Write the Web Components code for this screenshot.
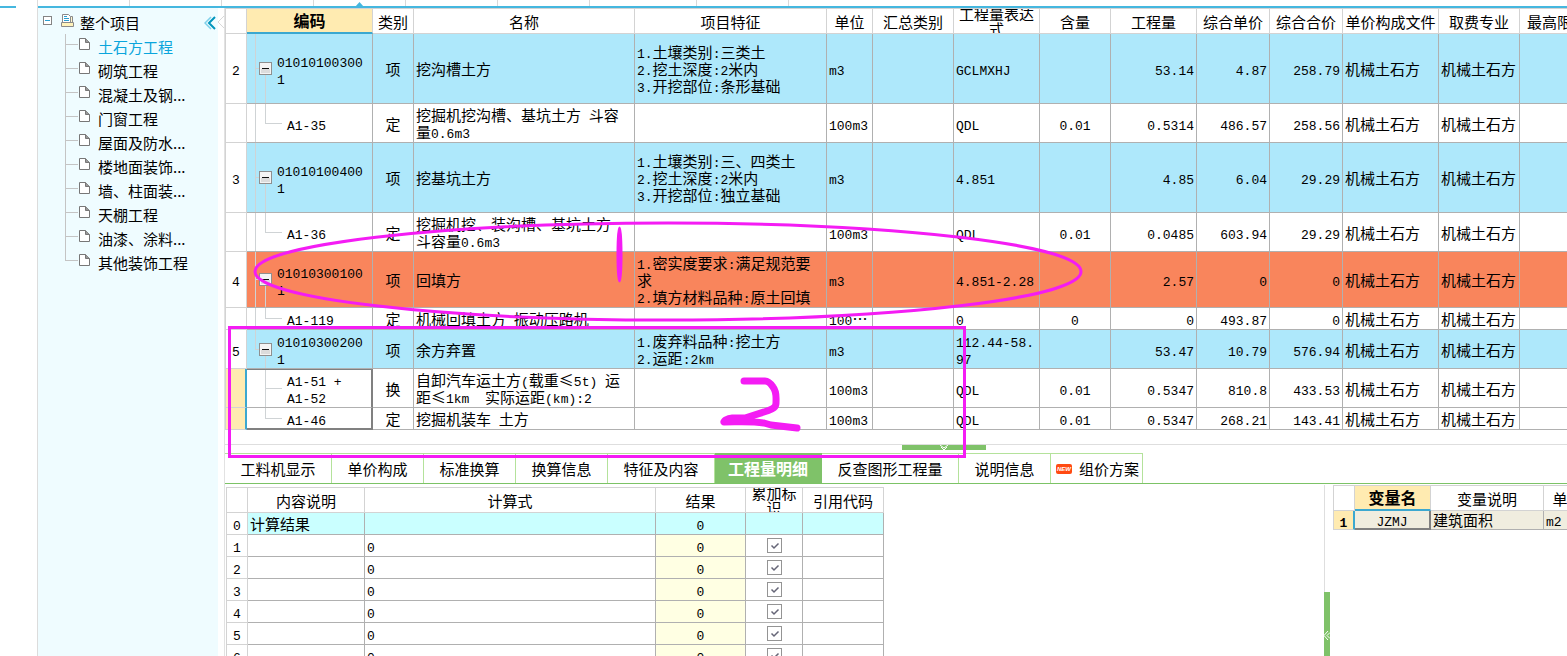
<!DOCTYPE html>
<html lang="zh-CN">
<head>
<meta charset="utf-8">
<title>工程量清单</title>
<style>
html, body { margin: 0; height: 100%; }
body { overflow: hidden; background: #fff; color: #000; font: 15px/17px "Noto Sans CJK SC", sans-serif; }
</style>
</head>
<body>
<cost-app></cost-app>
<script>
const BASE = `
*, *::before, *::after { box-sizing: border-box; }
button { font: inherit; color: inherit; background: none; border: 0; padding: 0; margin: 0; }
a { color: inherit; text-decoration: none; }
svg { display: block; }
.a { font-family: "Liberation Mono", monospace; font-size: 13px; line-height: 0; }
table { table-layout: fixed; border-collapse: separate; border-spacing: 0; border-left: 1px solid #d3d3d3; border-top: 1px solid #d3d3d3; }
th, td { padding: 0 2px; white-space: pre; overflow: hidden; font-weight: normal; border-right: 1px solid #b0b0b0; border-bottom: 1px solid #b0b0b0; text-align: left; vertical-align: middle; }
thead th, tbody th { border-color: #d3d3d3; text-align: center; }
thead th { padding: 0; height: 25px; }
.head { display: flex; height: 24px; align-items: center; justify-content: center; overflow: hidden; line-height: 15px; }
th.on { background: #ffebb1; font-weight: bold; font-size: 16px; }
thead th.on { border-bottom: 2px solid #3ba8d0; }
.on .head { height: 23px; }
.c { text-align: center; }
.r { text-align: right; }
`;
// Latin letters and digits are set in the fixed-width face, Chinese in the page face.
const mix = s => String(s).replace(/[\x20-\x7e]+/g, m => `<span class="a">${m}</span>`);
const cols = list => `<colgroup>${list.map(w => w ? `<col style="width:${w}px">` : '<col>').join('')}</colgroup>`;
const head = (list, active) => `<thead><tr>${list.map(t =>
  `<th scope="col"${t === active ? ' class="on"' : ''}><div class="head">${t}</div></th>`).join('')}</tr></thead>`;

class Base extends HTMLElement {
  constructor() {
    super();
    const t = document.createElement('template');
    t.innerHTML = `<style>${BASE}${this.css()}</style>${this.html()}`;
    this.attachShadow({ mode: 'open' }).append(t.content.cloneNode(true));
  }
  css() { return ''; }
  html() { return ''; }
}

class TopStrip extends Base {
  css() { return `
:host { display: flex; position: relative; height: 8px; border-bottom: 2px solid #45b7df; }
i { width: 92px; border-right: 1px solid #d9d9d9; }
i.w { width: 107px; }
svg { position: absolute; left: 317px; top: 2px; }`; }
  html() { return `<i></i><i></i><i></i><i></i><i></i><i></i><i class="w"></i><i></i>
<svg width="9" height="5" viewBox="0 0 9 5"><path d="M0 5 4.5 0 9 5z" fill="#45b7df"/></svg>`; }
}
customElements.define('top-strip', TopStrip);

class ProjectTree extends Base {
  css() { return `
:host { display: block; position: relative; width: 180px; padding-top: 2px; background: #effcff; }
.root, a { display: flex; align-items: center; height: 24px; white-space: nowrap; }
.root { padding-left: 5px; }
.root > svg { flex: none; margin: 0 9px 4px 0; }
.root > svg + svg { margin: 0 6px 4px 0; }
.fold { position: absolute; right: 2px; top: 8px; }
ul { list-style: none; margin: 0; padding: 0 0 0 27px; }
li { position: relative; }
li::before { content: ""; position: absolute; left: 0; top: 0; width: 13px; height: 11px; border-left: 1px solid #c4c4c4; border-bottom: 1px solid #c4c4c4; }
li:not(:last-child)::after { content: ""; position: absolute; left: 0; top: 0; height: 100%; border-left: 1px solid #c4c4c4; }
a { padding-left: 14px; }
a svg { margin: 0 8px 4px 0; }
a.sel { color: #0aa5dc; }`; }
  html() {
    const names = ['土石方工程', '砌筑工程', '混凝土及钢...', '门窗工程', '屋面及防水...', '楼地面装饰...', '墙、柱面装...', '天棚工程', '油漆、涂料...', '其他装饰工程'];
    return `<div class="root">
<svg width="9" height="9" viewBox="0 0 9 9"><rect x=".5" y=".5" width="8" height="8" fill="#fff" stroke="#848484"/><path d="M2 4.5h5" stroke="#2a9fd0"/></svg>
<svg width="13" height="13" viewBox="0 0 13 13"><path d="M9.500 2.500h2v9h-10v-3" fill="#fff8cf" stroke="#8a8a8a"/><path d="M1.500.5h6l2 2v6h-8z" fill="#fff" stroke="#8a8a8a"/><path d="M3 2.500h3M3 4.500h5M3 6.500h5" stroke="#2a9fd0"/><path d="M.5 8.500h12v4H.5z" fill="#fff3bb" stroke="#8a8a8a"/></svg>
<span>整个项目</span>
<button class="fold" aria-label="收起"><svg width="12" height="14" viewBox="0 0 12 14" fill="none" stroke-width="1.500"><path d="M7 1 1 7l6 6" stroke="#7fd0ea"/><path d="M11 1 5 7l6 6" stroke="#0095bd" stroke-width="2"/></svg></button>
</div><ul>${names.map((n, i) => `<li><a href="#"${i ? '' : ' class="sel"'}><svg width="11" height="12" viewBox="0 0 11 12"><path d="M.5.5h6l4 4v7H.5z" fill="#fff" stroke="#777"/><path d="M6.500.5v4h4" fill="#999" stroke="#777"/></svg><span>${n}</span></a></li>`).join('')}</ul>`;
  }
}
customElements.define('project-tree', ProjectTree);

class BillGrid extends Base {
  css() { return `
:host { display: block; padding-bottom: 14px; border-bottom: 1px solid #dedede; overflow: hidden; }
table { width: calc(100% + 28px); }
tr.item td { background-color: #aee8fb; }
tr.alert td { background-color: #f9855c; }
.code { --l: linear-gradient(#cfd3d5, #cfd3d5); padding: 0; background-repeat: no-repeat; }
.wrap { display: flex; align-items: center; padding-left: 12px; }
.wrap button { flex: none; margin-right: 5px; }
.item .code, .alert .code { background-image: var(--l), var(--l), var(--l); background-size: 1px 100%, 4px 1px, 1px 45%; background-position: 8px 0, 8px 50%, 18px 100%; }
.item.end .code { background-size: 1px 50%, 4px 1px, 1px 45%; }
.kid .code { padding-left: 40px; background-image: var(--l), var(--l), var(--l); background-size: 1px 100%, 1px 50%, 17px 1px; background-position: 8px 0, 18px 0, 18px 50%; }
.kid.pick .code { background-image: var(--l), var(--l); background-size: 1px 100%, 17px 1px; background-position: 18px 0, 18px 50%; border-right: 2px solid gray; box-shadow: inset 0 1px gray; }
.kid.last .code { background-size: 1px 50%, 17px 1px; border-bottom: 2px solid gray; box-shadow: none; }
.pick th { background: #ffebb1; border-right: 2px solid #3ba8d0; }`; }
  html() {
    const f = '机械土石方';
    const rows = [
      ['item', 70, 2, '01010100300\n1', '项', '挖沟槽土方', '1.土壤类别:三类土\n2.挖土深度:2米内\n3.开挖部位:条形基础', 'm3', 'GCLMXHJ', '', '53.14', '4.87', '258.79'],
      ['kid', 39, '', 'A1-35', '定', '挖掘机挖沟槽、基坑土方 斗容\n量0.6m3', '', '100m3', 'QDL', '0.01', '0.5314', '486.57', '258.56'],
      ['item', 70, 3, '01010100400\n1', '项', '挖基坑土方', '1.土壤类别:三、四类土\n2.挖土深度:2米内\n3.开挖部位:独立基础', 'm3', '4.851', '', '4.85', '6.04', '29.29'],
      ['kid', 39, '', 'A1-36', '定', '挖掘机挖、装沟槽、基坑土方\n斗容量0.6m3', '', '100m3', 'QDL', '0.01', '0.0485', '603.94', '29.29'],
      ['alert', 56, 4, '01010300100\n1', '项', '回填方', '1.密实度要求:满足规范要\n求\n2.填方材料品种:原土回填', 'm3', '4.851-2.28', '', '2.57', '0', '0'],
      ['kid', 22, '', 'A1-119', '定', '机械回填土方 振动压路机', '', '100…', '0', '0', '0', '493.87', '0'],
      ['item end', 39, 5, '01010300200\n1', '项', '余方弃置', '1.废弃料品种:挖土方\n2.运距:2km', 'm3', '112.44-58.\n97', '', '53.47', '10.79', '576.94'],
      ['kid pick', 39, '', 'A1-51 +\nA1-52', '换', '自卸汽车运土方(载重≤5t) 运\n距≤1km  实际运距(km):2', '', '100m3', 'QDL', '0.01', '0.5347', '810.8', '433.53'],
      ['kid pick last', 22, '', 'A1-46', '定', '挖掘机装车 土方', '', '100m3', 'QDL', '0.01', '0.5347', '268.21', '143.41']
    ];
    const box = `<button aria-label="折叠"><svg width="13" height="13" viewBox="0 0 13 13"><rect x=".5" y=".5" width="12" height="12" fill="#f4f4f4" stroke="#8f8f8f"/><path d="M2 7h9v4H2z" fill="#dcdcdc"/><path d="M3 6.500h7" stroke="#111"/></svg></button>`;
    const body = rows.map(([cls, h, no, code, kind, name, feat, unit, expr, ratio, qty, price, sum]) => `<tr class="${cls}" style="height:${h}px">
<th scope="row">${mix(no)}</th><td class="code">${cls.startsWith('kid') ? mix(code) : `<div class="wrap">${box}<span>${mix(code)}</span></div>`}</td><td class="c">${kind}</td><td>${mix(name)}</td><td>${mix(feat)}</td><td>${mix(unit)}</td><td></td><td>${mix(expr)}</td><td class="c">${mix(ratio)}</td><td class="r">${mix(qty)}</td><td class="r">${mix(price)}</td><td class="r">${mix(sum)}</td><td>${f}</td><td>${f}</td><td></td></tr>`).join('');
    return `<table>${cols([21, 126, 41, 221, 192, 46, 81, 86, 71, 86, 73, 73, 96, 81, 0])}${head(['', '编码', '类别', '名称', '项目特征', '单位', '汇总类别', '工程量表达\n式', '含量', '工程量', '综合单价', '综合合价', '单价构成文件', '取费专业', '最高限价'], '编码')}<tbody>${body}</tbody></table>`;
  }
}
customElements.define('bill-grid', BillGrid);

class DetailTabs extends Base {
  css() { return `
:host { display: block; }
.grip { display: flex; justify-content: center; height: 8px; }
.grip button { width: 84px; height: 5px; margin-left: 96px; background: #7fc269; }
.grip svg { margin: auto; }
.bar { display: flex; height: 31px; border-bottom: 1px solid #7cc366; }
.tab { flex: none; width: 92px; height: 30px; border-top: 1px solid #b4e29b; border-right: 1px solid #b4e29b; white-space: nowrap; }
.w1 { width: 107px; }
.w2 { width: 137px; }
.on { background: #7fc269; border-color: #7fc269; color: #fff; font-weight: bold; font-size: 16px; }
.tag { display: flex; align-items: center; justify-content: space-between; padding: 0 3px 0 5px; }
.new { display: block; width: 16px; height: 10px; border-radius: 2px; background: #ff4a12; color: #fff; font: italic bold 6px/10px "Liberation Sans", sans-serif; text-align: center; }`; }
  html() {
    const tabs = [['工料机显示', 'w1'], ['单价构成', ''], ['标准换算', ''], ['换算信息', ''], ['特征及内容', 'w1'], ['工程量明细', 'w1 on'], ['反查图形工程量', 'w2'], ['说明信息', '']];
    return `<div class="grip"><button aria-label="收起明细"><svg width="10" height="5" viewBox="0 0 10 5" fill="none" stroke="#fff"><path d="M1 0l4 3 4-3M2 2l3 3 3-3"/></svg></button></div>
<div class="bar" role="tablist">${tabs.map(([t, c]) => `<button role="tab" class="tab ${c}" aria-selected="${c.includes('on')}">${t}</button>`).join('')}<button role="tab" class="tab tag" aria-selected="false"><span class="new">NEW</span><span>组价方案</span></button></div>`;
  }
}
customElements.define('detail-tabs', DetailTabs);

class QuantityGrid extends Base {
  css() { return `
:host { display: block; padding: 3px 0 0 1px; overflow: hidden; }
table { width: 658px; }
tbody tr { height: 22px; }
tr.sum td { background: #caffff; }
.y { background: #ffffe3; }
input { appearance: none; display: block; width: 15px; height: 15px; margin: 0 auto; border: 1px solid #949494; background: #fff; }
input:checked { background: #fff url("data:image/svg+xml,%3Csvg xmlns='http://www.w3.org/2000/svg' width='13' height='13'%3E%3Cpath d='M3.500 6.500l2.500 2.500 4.500-4.500' fill='none' stroke='%23667' stroke-width='1.500'/%3E%3C/svg%3E") center no-repeat; }`; }
  html() {
    const rows = [1, 2, 3, 4, 5, 6, 7].map(n => `<tr><th scope="row">${mix(n)}</th><td></td><td>${mix(0)}</td><td class="y c">${mix(0)}</td><td><input type="checkbox" checked aria-label="累加标识 ${n}"></td><td></td></tr>`).join('');
    return `<table>${cols([21, 117, 291, 90, 57, 0])}${head(['', '内容说明', '计算式', '结果', '累加标\n识', '引用代码'])}<tbody><tr class="sum"><th scope="row">${mix(0)}</th><td>计算结果</td><td></td><td class="c">${mix(0)}</td><td></td><td></td></tr>${rows}</tbody></table>`;
  }
}
customElements.define('quantity-grid', QuantityGrid);

class VariableGrid extends Base {
  css() { return `
:host { display: flex; width: 243px; margin-top: 1px; overflow: hidden; }
.split { flex: none; width: 6px; margin-right: 3px; border-left: 1px solid #dedede; padding-top: 107px; }
.split button { display: flex; width: 6px; height: 86px; margin-left: -1px; background: #7fc269; }
.split svg { margin: auto; }
table { flex: none; align-self: flex-start; width: 259px; }
tbody tr { height: 19px; }
td { background: #f0eddf; }
th.on .a { font-weight: bold; }
tbody th { border-right: 2px solid #3ba8d0; }
tbody td, tbody th { line-height: 16px; }
td.cur { border-right: 2px solid gray; border-bottom: 2px solid gray; }`; }
  html() { return `<div class="split"><button aria-label="展开"><svg width="6" height="9" viewBox="0 0 6 9" fill="none" stroke="#fff"><path d="M4 0 0 4.500 4 9M6 1.500 3 4.500l3 3"/></svg></button></div>
<table>${cols([21, 76, 113, 0])}${head(['', '变量名', '变量说明', '单位'], '变量名')}<tbody><tr><th scope="row" class="on">${mix(1)}</th><td class="cur c">${mix('JZMJ')}</td><td>建筑面积</td><td>${mix('m2')}</td></tr></tbody></table>`; }
}
customElements.define('variable-grid', VariableGrid);

// Freehand marks laid over the grid.
class MarkUp extends Base {
  css() { return `:host { position: absolute; left: 0; top: 0; pointer-events: none; }`; }
  html() { return `<svg width="1100" height="470" viewBox="0 0 1100 470" fill="none" stroke="#f41cf4" stroke-width="3">
<ellipse cx="668" cy="271.500" rx="413" ry="48.500"/>
<rect x="229.500" y="327.500" width="735" height="129"/>
<ellipse cx="619.500" cy="254.500" rx="2" ry="27" fill="#f41cf4" stroke-width="2"/>
<path d="M744 381h21c4 0 6 3 8 6 4 5 3 10 3 16 0 5-4 6-9 8l-22 7h-13c-5 0-9 4-8 4 14 0 27-1 40 1l7 2 26 3" stroke-width="7" stroke-linecap="round" stroke-linejoin="round"/></svg>`; }
}
customElements.define('mark-up', MarkUp);

class CostApp extends Base {
  css() { return `
:host { display: flex; height: 100vh; position: relative; overflow: hidden; }
.gutter { flex: none; width: 38px; border-right: 1px solid #dcdcdc; padding-top: 6px; }
.gutter i { display: block; width: 16px; height: 2px; background: #45b7df; }
.page { flex: 1; min-width: 0; display: flex; flex-direction: column; }
.body { flex: 1; min-height: 0; display: flex; }
project-tree { flex: none; }
.edge { flex: none; width: 6px; padding-top: 7px; }
.work { flex: 1; min-width: 0; display: flex; flex-direction: column; border-left: 1px solid #e2e2e2; }
bill-grid, detail-tabs, top-strip { flex: none; }
.lower { flex: 1; min-height: 0; display: flex; }
quantity-grid { flex: 1; min-width: 0; }
variable-grid { flex: none; }`; }
  html() { return `<div class="gutter"><i></i></div>
<div class="page"><top-strip></top-strip><div class="body"><project-tree></project-tree>
<div class="edge"><svg width="6" height="14" viewBox="0 0 6 14" fill="none" stroke="#d8d8d8"><path d="M6 1 0 7l6 6"/></svg></div>
<div class="work"><bill-grid></bill-grid><detail-tabs></detail-tabs><div class="lower"><quantity-grid></quantity-grid><variable-grid></variable-grid></div></div></div></div>
<mark-up></mark-up>`; }
}
customElements.define('cost-app', CostApp);
</script>
</body>
</html>
